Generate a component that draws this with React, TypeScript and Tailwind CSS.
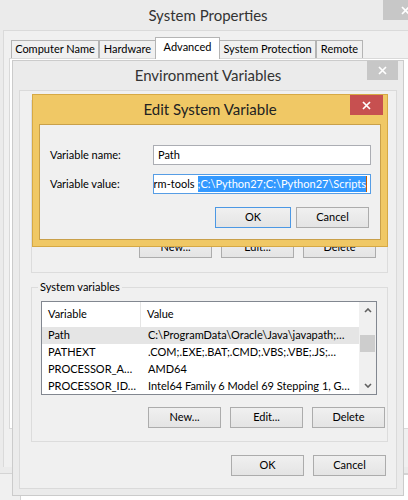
import React from "react";
import clsx from "clsx";

function CloseX() {
  return (
    <svg width="9" height="9" viewBox="0 0 9 9">
      <path d="M1 1L8 8M8 1L1 8" stroke="white" strokeWidth="1.7" />
    </svg>
  );
}

function Chevron({ down }: { down?: boolean }) {
  return (
    <svg width="8" height="5" viewBox="0 0 8 5">
      <path
        d={down ? "M1 1L4 4L7 1" : "M1 4L4 1L7 4"}
        fill="none"
        stroke="#606060"
        strokeWidth="1.6"
      />
    </svg>
  );
}

function Button({
  children,
  primary,
  className,
}: {
  children: React.ReactNode;
  primary?: boolean;
  className?: string;
}) {
  return (
    <div
      className={clsx(
        "flex h-[21px] shrink-0 items-center justify-center border bg-linear-to-b from-[#f0f0f0] to-[#e4e4e4]",
        primary ? "border-[#4c98e4]" : "border-[#acacac]",
        className ?? "w-[73px]",
      )}
    >
      {children}
    </div>
  );
}

const tabs = [
  { label: "Computer Name", w: "w-[88px]" },
  { label: "Hardware", w: "w-[57px]" },
  { label: "Advanced", w: "w-[65px]" },
  { label: "System Protection", w: "w-[97px]" },
  { label: "Remote", w: "w-[47px]" },
];

const rows = [
  { name: "Path", value: "C:\\ProgramData\\Oracle\\Java\\javapath;…", selected: true },
  { name: "PATHEXT", value: ".COM;.EXE;.BAT;.CMD;.VBS;.VBE;.JS;…" },
  { name: "PROCESSOR_A…", value: "AMD64" },
  { name: "PROCESSOR_ID…", value: "Intel64 Family 6 Model 69 Stepping 1, G…" },
];

export default function App() {
  return (
    <div className="relative h-[500px] w-[408px] overflow-hidden bg-[#f0f0f0] font-[Lato,'Liberation_Sans',sans-serif] text-[11px] text-black">
      {/* window behind, peeking out at the bottom */}
      <div className="absolute left-[20px] top-[474px] h-[40px] w-[400px] border-l border-t border-[#d4d4d4] bg-white" />

      {/* System Properties */}
      <div className="absolute left-[-12px] top-0 h-[474px] w-[440px] border-b border-[#d4d4d4] bg-[#ebebeb]">
        <div className="flex h-[30px] items-center justify-center text-[15px] text-[#333]">
          System Properties
        </div>
        <div className="absolute left-[395px] top-0 flex h-[20px] w-[45px] items-center justify-center bg-[#c7c7c7]">
          <CloseX />
        </div>
        <div className="ml-[15px] h-[437px] w-[420px] border-l border-t border-[#dadada] bg-[#f0f0f0] pl-[5px] pt-[6px]">
          <div className="ml-[2px] flex h-[21px] items-end">
            {tabs.map((t) => (
              <div
                key={t.label}
                className={clsx(
                  "flex shrink-0 items-center justify-center border border-b-0 border-[#b4b4b4]",
                  t.w,
                  t.label === "Advanced"
                    ? "relative z-10 -mx-px -mb-px h-[22px] bg-white pb-[3px]"
                    : "h-[18px] bg-[#f0f0f0]",
                )}
              >
                {t.label}
              </div>
            ))}
          </div>
          <div className="h-[371px] border border-[#d9d9d9] bg-white" />
        </div>
      </div>

      {/* Environment Variables */}
      <div className="absolute left-[12px] top-[60px] h-[436px] w-[392px] border border-[#cbcbcb] bg-[#ebebeb]">
        <div className="flex h-[29px] items-center justify-center text-[15px] text-[#333]">
          Environment Variables
        </div>
        <div className="absolute right-[5px] top-0 flex h-[19px] w-[31px] items-center justify-center bg-[#c7c7c7]">
          <CloseX />
        </div>
        <div className="mx-[6px] h-[399px] border border-[#dadada] bg-[#f0f0f0]">
          {/* User variables */}
          <div className="ml-[11px] mt-[9px] flex h-[173px] w-[357px] flex-col justify-end border border-[#dcdcdc] pb-[14px] pr-[11px]">
            <div className="flex justify-end gap-[9px]">
              <Button>New...</Button>
              <Button>Edit...</Button>
              <Button>Delete</Button>
            </div>
          </div>

          {/* System variables */}
          <div className="relative ml-[11px] mt-[14px] h-[155px] w-[357px] border border-[#dcdcdc] pl-[9px] pt-[13px]">
            <span className="absolute left-[6px] top-[-9px] bg-[#f0f0f0] px-[2px]">System variables</span>
            <div className="flex h-[94px] w-[336px] border border-[#828790] bg-white">
              <div className="flex-1 overflow-hidden">
                <div className="flex h-[25px] items-center">
                  <div className="flex h-full w-[99px] items-center border-r border-[#e5e5e5] pl-[6px]">
                    Variable
                  </div>
                  <div className="pl-[6px]">Value</div>
                </div>
                {rows.map((r) => (
                  <div
                    key={r.name}
                    className={clsx("flex h-[17px] items-center whitespace-nowrap", r.selected && "bg-[#e5e5e5]")}
                  >
                    <div className="w-[99px] shrink-0 overflow-hidden pl-[6px]">{r.name}</div>
                    <div className="flex-1 overflow-hidden pl-[7px]">{r.value}</div>
                  </div>
                ))}
              </div>
              <div className="flex w-[17px] flex-col items-center bg-[#f0f0f0]">
                <div className="flex h-[17px] items-center">
                  <Chevron />
                </div>
                <div className="mt-[16px] h-[17px] w-[15px] bg-[#cdcdcd]" />
                <div className="flex-1" />
                <div className="flex h-[17px] items-center">
                  <Chevron down />
                </div>
              </div>
            </div>
            <div className="mt-[12px] flex justify-end gap-[9px] pr-[2px]">
              <Button>New...</Button>
              <Button>Edit...</Button>
              <Button>Delete</Button>
            </div>
          </div>

          <div className="mt-[13px] flex justify-end gap-[9px] pr-[10px]">
            <Button>OK</Button>
            <Button>Cancel</Button>
          </div>
        </div>
      </div>

      {/* Edit System Variable */}
      <div className="absolute left-[32px] top-[94px] h-[153px] w-[356px] border border-[#d6a944] bg-[#f0c865]">
        <div className="flex h-[29px] items-center justify-center text-[15px] text-[#222]">
          Edit System Variable
        </div>
        <div className="absolute right-[4px] top-0 flex h-[20px] w-[33px] items-center justify-center bg-[#c75050]">
          <CloseX />
        </div>
        <div className="mx-[6px] h-[116px] border border-[#c9a04a] bg-[#f0f0f0] pl-[10px] pr-[10px] pt-[20px]">
          <div className="flex items-center">
            <div className="w-[103px] shrink-0">Variable name:</div>
            <div className="flex h-[20px] w-[218px] shrink-0 items-center border border-[#abadb3] bg-white pl-[4px]">
              Path
            </div>
          </div>
          <div className="mt-[9px] flex items-center">
            <div className="w-[103px] shrink-0">Variable value:</div>
            <div className="relative h-[20px] w-[218px] shrink-0 overflow-hidden border border-[#569de5] bg-white">
              {/* field is scrolled to its end, so the start of the value is clipped off on the left */}
              <div className="absolute right-[3px] top-0 flex h-full items-center whitespace-nowrap">
                <span className="pr-[3px]">platform-tools</span>
                <span className="flex h-[16px] items-center bg-[#3399ff] text-white">
                  {";C:\\Python27;C:\\Python27\\Scripts"}
                </span>
                <span className="h-[16px] w-px bg-[#c45a00]" />
              </div>
            </div>
          </div>
          <div className="mt-[13px] flex justify-end gap-[5px] pr-[1px]">
            <Button primary className="w-[76px]">
              OK
            </Button>
            <Button>Cancel</Button>
          </div>
        </div>
      </div>
    </div>
  );
}
